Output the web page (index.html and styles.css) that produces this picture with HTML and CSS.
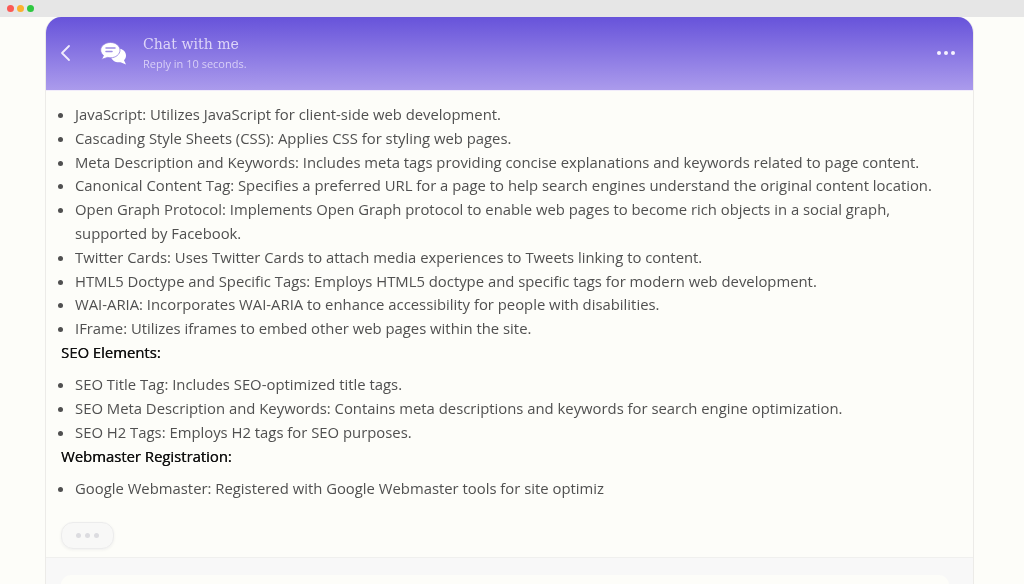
FILE: index.html
```html
<!DOCTYPE html>
<html lang="en">
<head>
<meta charset="utf-8">
<title>Chat with me</title>
<link rel="stylesheet" href="styles.css">
</head>
<body>
<div class="browser-bar">
  <span class="light red"></span><span class="light amber"></span><span class="light green"></span>
</div>
<main class="stage">
  <section class="chat">
    <header class="chat-head">
      <svg class="back" width="12" height="18" viewBox="0 0 12 18" aria-hidden="true"><path d="M10 2 3 9l7 7" fill="none" stroke="#f1ecfd" stroke-width="1.800" stroke-linecap="round" stroke-linejoin="round"/></svg>
      <svg class="bubbles" width="28" height="24" viewBox="0 0 28 24" aria-hidden="true">
        <path d="M18 6.500c4.500 0 8 3 8 7 0 2-.8 3.600-2 4.800l2 4.200-5.500-2.300c-4.500.8-9-1.800-9.800-5.700z" fill="#fff"/>
        <path d="M10.500 0.500c5.200 0 9.500 3.300 9.500 7.600s-4.300 7.700-9.500 7.700c-1 0-2-.1-2.900-.4L1.500 17.500l2-4.100C1.600 12 .7 10.200.7 8.100.7 3.800 5.300.5 10.500.5z" fill="#fff" stroke="#8f7be0" stroke-width=".8"/>
        <path d="M6 6h9M6 9.500h6" stroke="#9d8de4" stroke-width="1.500" stroke-linecap="round"/>
      </svg>
      <div class="titles">
        <div class="title">Chat with me</div>
        <div class="subtitle">Reply in 10 seconds.</div>
      </div>
      <div class="menu"><i></i><i></i><i></i></div>
    </header>
    <div class="messages">
      <ul class="list">
        <li>JavaScript: Utilizes JavaScript for client-side web development.</li>
        <li>Cascading Style Sheets (CSS): Applies CSS for styling web pages.</li>
        <li>Meta Description and Keywords: Includes meta tags providing concise explanations and keywords related to page content.</li>
        <li>Canonical Content Tag: Specifies a preferred URL for a page to help search engines understand the original content location.</li>
        <li>Open Graph Protocol: Implements Open Graph protocol to enable web pages to become rich objects in a social graph, supported by Facebook.</li>
        <li>Twitter Cards: Uses Twitter Cards to attach media experiences to Tweets linking to content.</li>
        <li>HTML5 Doctype and Specific Tags: Employs HTML5 doctype and specific tags for modern web development.</li>
        <li>WAI-ARIA: Incorporates WAI-ARIA to enhance accessibility for people with disabilities.</li>
        <li>IFrame: Utilizes iframes to embed other web pages within the site.</li>
      </ul>
      <p class="section">SEO Elements:</p>
      <ul class="list">
        <li>SEO Title Tag: Includes SEO-optimized title tags.</li>
        <li>SEO Meta Description and Keywords: Contains meta descriptions and keywords for search engine optimization.</li>
        <li>SEO H2 Tags: Employs H2 tags for SEO purposes.</li>
      </ul>
      <p class="section">Webmaster Registration:</p>
      <ul class="list">
        <li>Google Webmaster: Registered with Google Webmaster tools for site optimiz</li>
      </ul>
      <div class="typing"><i></i><i></i><i></i></div>
    </div>
    <footer class="composer"><div class="input"></div></footer>
  </section>
</main>
</body>
</html>
```
FILE: styles.css
```css
* { box-sizing: border-box; }
html, body { margin: 0; height: 100%; overflow: hidden; }
body { background: #fdfdf9; font-family: "Open Sans", sans-serif; color: #505050; display: flex; flex-direction: column; }
.browser-bar { height: 17px; flex: none; background: #e6e6e6; display: flex; align-items: center; gap: 3px; padding-left: 7px; padding-bottom: 1px; }
.light { width: 7px; height: 7px; border-radius: 50%; }
.red { background: #fb5a55; }
.amber { background: #fbb12e; }
.green { background: #2ec840; }
.stage { flex: 1; min-height: 0; padding-left: 45px; padding-right: 50px; }
.chat { height: 100%; border-left: 1px solid #ecebe8; border-right: 1px solid #ecebe8; border-radius: 16px 16px 0 0; display: flex; flex-direction: column; overflow: hidden; filter: blur(.35px); }
.chat-head { height: 74px; flex: none; margin: 0 -1px; background: linear-gradient(#6753da, #ab9bec); display: flex; align-items: center; padding: 0 19px 3px 14px; border-bottom: 1px solid #f1ecfb; }
.back { margin-right: 29px; margin-top: 1px; }
.bubbles { margin-right: 15px; margin-top: 3px; }
.titles { flex: 1; }
.title { font-family: "DejaVu Serif", serif; font-size: 14.1px; line-height: 22px; color: #ddd5f8; margin-top: -1px; }
.subtitle { font-size: 11px; line-height: 15px; color: #d8cff7; margin-top: 1px; }
.menu { display: flex; gap: 3px; margin-top: 1px; }
.menu i { width: 4px; height: 4px; border-radius: 50%; background: #f6f3ff; }
.messages { flex: 1; min-height: 0; padding: 12px 15px 0; font-size: 14.85px; line-height: 23.8px; }
.list { margin: 0; padding: 0 0 0 14px; list-style: disc; }
.section { margin: 0 0 8.5px; color: #111; font-weight: 500; text-shadow: .3px 0 #111; }
.typing { width: 53px; height: 27px; margin-top: 21px; border: 1px solid #ececec; border-radius: 12px; background: #f8f8f7; display: flex; align-items: center; justify-content: center; gap: 4px; box-shadow: 0 1px 3px #f0f0ee; }
.typing i { width: 5px; height: 5px; border-radius: 50%; background: #dcdce0; }
.composer { height: 27px; flex: none; background: #f8f8f8; border-top: 1px solid #f0f0ee; padding: 17px 24px 0 15px; }
.input { height: 12px; background: #fdfdf9; border-radius: 10px 10px 0 0; }
```
